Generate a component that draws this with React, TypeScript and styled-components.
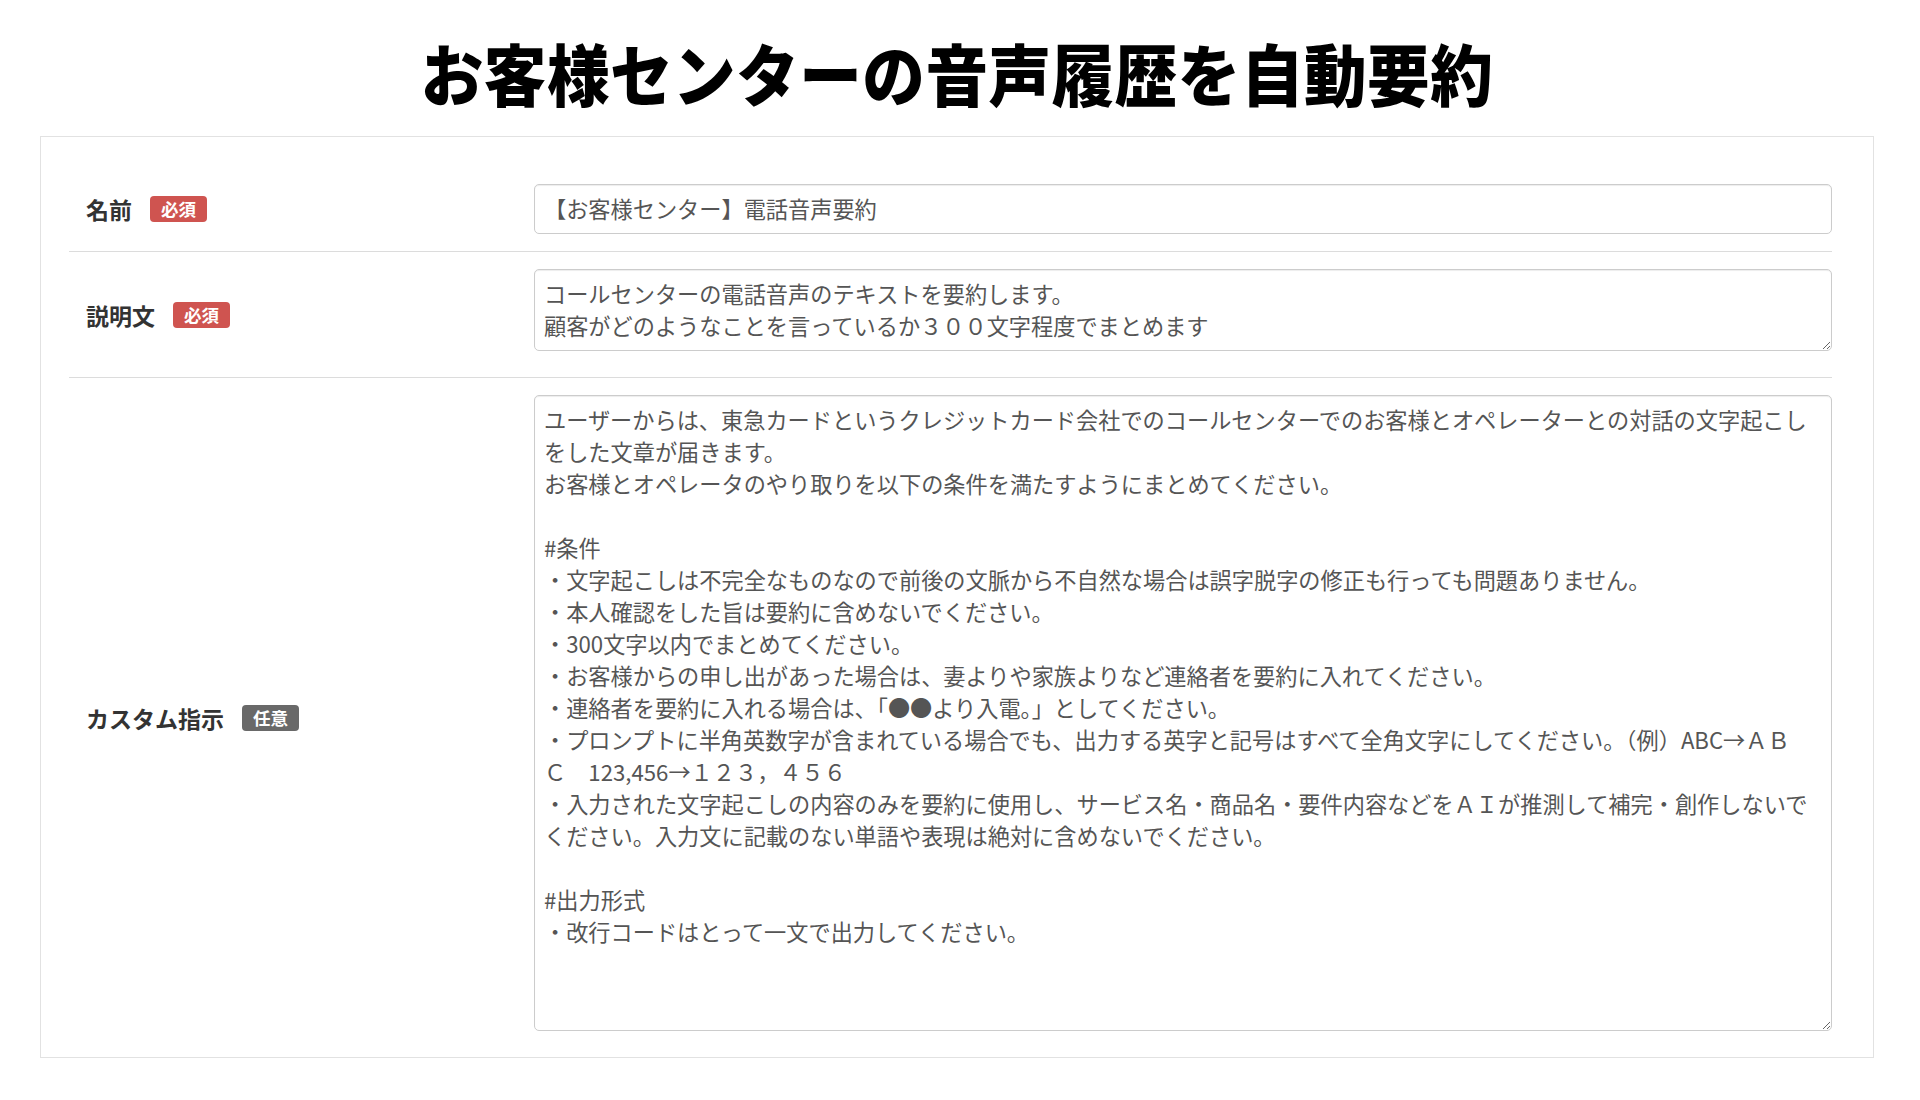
import React from "react";
import styled, { createGlobalStyle } from "styled-components";

const GlobalStyle = createGlobalStyle`
  html, body {
    margin: 0;
    padding: 0;
    background: #ffffff;
  }
  body {
    font-family: "Noto Sans CJK JP", "Noto Sans", sans-serif;
    color: #333333;
  }
  * { box-sizing: border-box; }
`;

const Page = styled.div`
  width: 1920px;
  padding: 40px 46px 0 40px;
`;

const Title = styled.h1`
  margin: 0 0 32px;
  height: 64px;
  line-height: 64px;
  text-align: center;
  font-family: "Noto Sans CJK JP", sans-serif;
  font-size: 62.6px;
  font-weight: 900;
  color: #000000;
  letter-spacing: 0.5px;
  white-space: nowrap;
  transform: scaleY(1.08);
  transform-origin: center;
`;

const Card = styled.div`
  border: 1px solid #e2e2e2;
  background: #ffffff;
  padding: 30px 41px 0 28px;
`;

const Row = styled.div<{ $last?: boolean }>`
  display: flex;
  align-items: center;
  padding: 17px 0;
  border-bottom: ${(p) => (p.$last ? "none" : "1px solid #dcdcdc")};
`;

const LabelCell = styled.div`
  flex: 0 0 465px;
  display: flex;
  align-items: center;
  padding-left: 17px;
`;

const LabelText = styled.span`
  font-size: 23px;
  font-weight: 700;
  color: #333333;
  line-height: 32px;
`;

const Badge = styled.span<{ $tone: "required" | "optional" }>`
  display: inline-block;
  margin-left: 18px;
  padding: 4px 11px;
  border-radius: 4px;
  font-size: 17.5px;
  line-height: 18px;
  font-weight: 700;
  color: #ffffff;
  background: ${(p) => (p.$tone === "required" ? "#cf5450" : "#696969")};
`;

const FieldCell = styled.div`
  flex: 1 1 auto;
  min-width: 0;
`;

const fieldBase = `
  display: block;
  width: 100%;
  border: 1px solid #cccccc;
  border-radius: 5px;
  background: #ffffff;
  box-shadow: inset 0 1px 1px rgba(0, 0, 0, 0.075);
  padding: 7px 12px 9px 9px;
  font-family: "Noto Sans CJK JP", "Noto Sans", sans-serif;
  font-size: 22.2px;
  line-height: 32px;
  color: #555555;
  outline: none;
  margin: 0;
`;

const TextInput = styled.input`
  ${fieldBase}
  height: 50px;
`;

const TextArea = styled.textarea<{ $height: number }>`
  ${fieldBase}
  height: ${(p) => p.$height}px;
  margin-bottom: 9px;
  resize: vertical;
  overflow: auto;
`;

const customText = `ユーザーからは、東急カードというクレジットカード会社でのコールセンターでのお客様とオペレーターとの対話の文字起こしをした文章が届きます。
お客様とオペレータのやり取りを以下の条件を満たすようにまとめてください。

#条件
・文字起こしは不完全なものなので前後の文脈から不自然な場合は誤字脱字の修正も行っても問題ありません。
・本人確認をした旨は要約に含めないでください。
・300文字以内でまとめてください。
・お客様からの申し出があった場合は、妻よりや家族よりなど連絡者を要約に入れてください。
・連絡者を要約に入れる場合は、「●●より入電。」としてください。
・プロンプトに半角英数字が含まれている場合でも、出力する英字と記号はすべて全角文字にしてください。（例）ABC→ＡＢ
Ｃ　123,456→１２３，４５６
・入力された文字起こしの内容のみを要約に使用し、サービス名・商品名・要件内容などをＡＩが推測して補完・創作しないでください。入力文に記載のない単語や表現は絶対に含めないでください。

#出力形式
・改行コードはとって一文で出力してください。`;

const descText = `コールセンターの電話音声のテキストを要約します。
顧客がどのようなことを言っているか３００文字程度でまとめます`;

export default function App() {
  return (
    <>
      <GlobalStyle />
      <Page>
        <Title>お客様センターの音声履歴を自動要約</Title>
        <Card>
          <Row>
            <LabelCell>
              <LabelText>名前</LabelText>
              <Badge $tone="required">必須</Badge>
            </LabelCell>
            <FieldCell>
              <TextInput type="text" defaultValue="【お客様センター】電話音声要約" />
            </FieldCell>
          </Row>
          <Row>
            <LabelCell>
              <LabelText>説明文</LabelText>
              <Badge $tone="required">必須</Badge>
            </LabelCell>
            <FieldCell>
              <TextArea $height={82} defaultValue={descText} />
            </FieldCell>
          </Row>
          <Row $last>
            <LabelCell>
              <LabelText>カスタム指示</LabelText>
              <Badge $tone="optional">任意</Badge>
            </LabelCell>
            <FieldCell>
              <TextArea $height={636} defaultValue={customText} />
            </FieldCell>
          </Row>
        </Card>
      </Page>
    </>
  );
}
